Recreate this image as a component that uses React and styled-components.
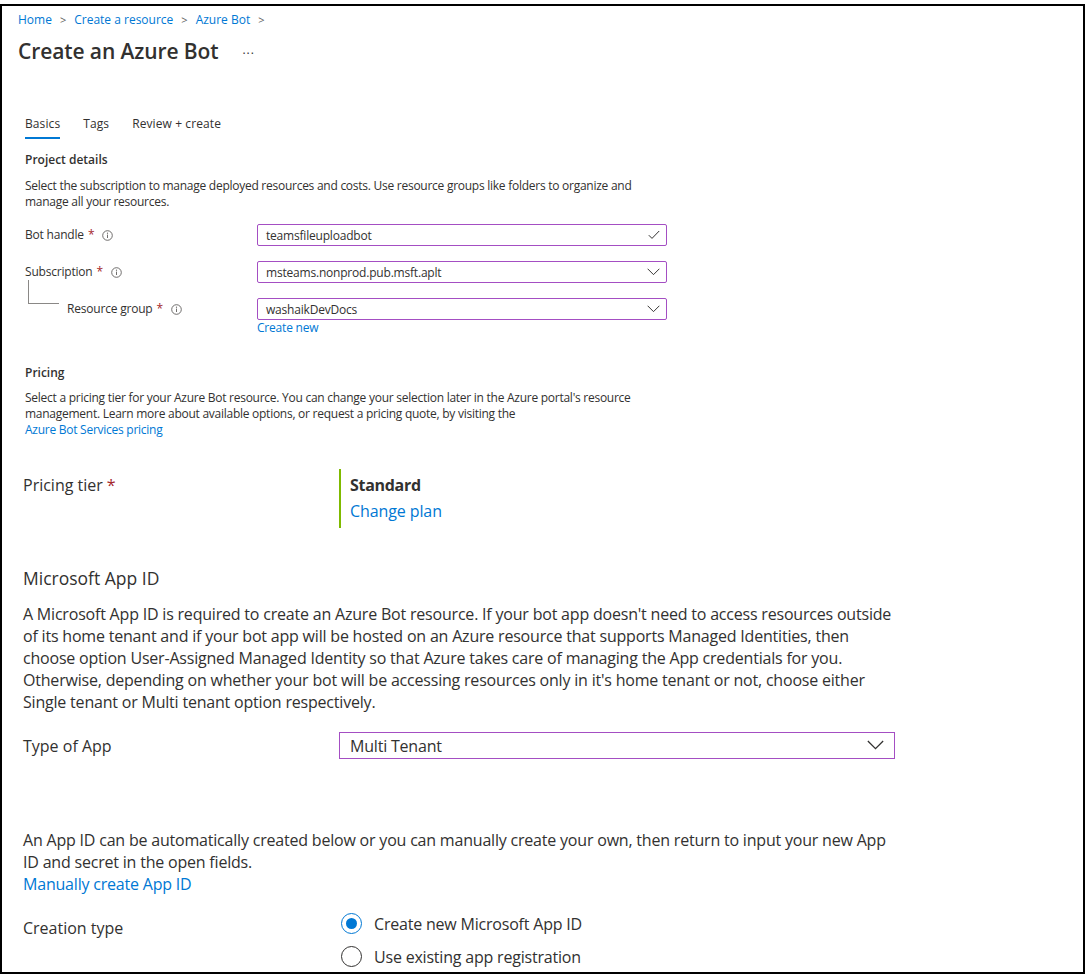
import React from 'react'
import styled, { createGlobalStyle } from 'styled-components'

const GlobalStyle = createGlobalStyle`
  html, body {
    margin: 0;
    padding: 0;
    background: #fff;
  }
  body {
    font-family: "Open Sans", "Noto Sans", sans-serif;
    color: #323130;
  }
`

const Frame = styled.div`
  box-sizing: border-box;
  margin-top: 4px;
  width: 1085px;
  height: 970px;
  border: 2px solid #000;
  overflow: hidden;
`

const Breadcrumb = styled.div`
  display: flex;
  align-items: center;
  gap: 8px;
  padding: 6px 0 0 16px;
  font-size: 12px;
  line-height: 16px;
  color: #0078d4;
`

const Crumb = styled.span`
  color: #0078d4;
`

const Sep = styled.span`
  color: #605e5c;
  font-size: 11px;
`

const TitleRow = styled.div`
  display: flex;
  align-items: center;
  gap: 24px;
  margin-top: 9px;
  padding-left: 16px;
  height: 28px;
`

const Title = styled.h1`
  margin: 0;
  font-size: 21px;
  font-weight: 600;
  line-height: 28px;
  letter-spacing: -0.1px;
  color: #323130;
`

const More = styled.span`
  font-size: 12px;
  color: #323130;
  letter-spacing: 1px;
  margin-top: -4px;
`

const Upper = styled.div`
  padding-left: 23px;
`

const Tabs = styled.div`
  display: flex;
  gap: 23px;
  margin-top: 51px;
`

const Tab = styled.div`
  font-size: 12px;
  line-height: 16px;
  padding-bottom: 5px;
  letter-spacing: 0.1px;
  color: #323130;
  border-bottom: 2px solid ${p => (p.$active ? '#0078d4' : 'transparent')};
`

const SectionTitle = styled.div`
  margin-top: ${p => p.$top}px;
  font-size: 12px;
  font-weight: 600;
  line-height: 16px;
`

const SmallText = styled.p`
  margin: ${p => p.$top}px 0 0;
  font-size: 12px;
  line-height: 16px;
  letter-spacing: -0.26px;
  white-space: nowrap;
`

const Link = styled.a`
  color: #0078d4;
  text-decoration: none;
  display: block;
`

const FieldRow = styled.div`
  display: grid;
  grid-template-columns: 232px 410px;
  align-items: center;
  margin-top: ${p => p.$top}px;
`

const Label = styled.div`
  display: flex;
  align-items: center;
  font-size: 12px;
  line-height: 16px;
  letter-spacing: -0.2px;
`

const Req = styled.span`
  color: #a4262c;
  margin-left: 4px;
`

const Info = styled.span`
  display: inline-flex;
  align-items: center;
  justify-content: center;
  width: 11px;
  height: 11px;
  margin-left: 8px;
`

const Tree = styled.span`
  box-sizing: border-box;
  width: 31px;
  height: 24px;
  margin: -18px 8px 0 3px;
  border-left: 1px solid #8a8886;
  border-bottom: 1px solid #8a8886;
  align-self: flex-start;
`

const TreeLabel = styled(Label)`
  align-self: stretch;
`

const Input = styled.div`
  box-sizing: border-box;
  display: flex;
  align-items: center;
  justify-content: space-between;
  height: 22px;
  padding: 0 6px 0 8px;
  border: 1px solid #a44ec3;
  border-radius: 2px;
  font-size: 12px;
  letter-spacing: -0.2px;
  color: #323130;
`

const Lower = styled.div`
  padding-left: 21px;
`

const TierRow = styled.div`
  display: grid;
  grid-template-columns: 316px auto;
  margin-top: 31px;
`

const BigLabel = styled.div`
  font-size: 16px;
  line-height: 22px;
  padding-top: ${p => p.$pt || 0}px;
  color: #323130;
`

const TierBox = styled.div`
  border-left: 2px solid #7fba00;
  padding: 5px 0 6px 9px;
`

const TierName = styled.div`
  font-size: 16px;
  font-weight: 700;
  line-height: 22px;
  letter-spacing: -0.3px;
`

const BigLink = styled(Link)`
  font-size: 16px;
  line-height: 22px;
  margin-top: ${p => p.$top || 0}px;
  letter-spacing: -0.1px;
`

const Heading = styled.div`
  margin-top: 38px;
  font-size: 17.5px;
  font-weight: 500;
  line-height: 24px;
`

const Para = styled.p`
  margin: ${p => p.$top}px 0 0;
  font-size: 16px;
  line-height: 22px;
  letter-spacing: -0.2px;
  white-space: nowrap;
`

const TypeRow = styled.div`
  display: grid;
  grid-template-columns: 316px 556px;
  align-items: center;
  margin-top: 19px;
`

const BigSelect = styled.div`
  box-sizing: border-box;
  display: flex;
  align-items: center;
  justify-content: space-between;
  height: 27px;
  padding: 0 10px;
  border: 1px solid #a44ec3;
  font-size: 16px;
  letter-spacing: -0.2px;
`

const CreationRow = styled.div`
  display: grid;
  grid-template-columns: 318px auto;
  margin-top: 12px;
`

const Options = styled.div`
  display: flex;
  flex-direction: column;
`

const Option = styled.label`
  display: flex;
  align-items: center;
  gap: 12px;
  height: 33px;
  font-size: 16px;
  letter-spacing: -0.2px;
`

const Radio = styled.span`
  box-sizing: border-box;
  width: 21px;
  height: 21px;
  border-radius: 50%;
  border: 1px solid ${p => (p.$on ? '#0078d4' : '#323130')};
  display: flex;
  align-items: center;
  justify-content: center;
  &::after {
    content: '';
    width: 11px;
    height: 11px;
    border-radius: 50%;
    background: ${p => (p.$on ? '#0078d4' : 'transparent')};
  }
`

const InfoIcon = () => (
  <Info>
    <svg width="11" height="11" viewBox="0 0 11 11">
      <circle cx="5.5" cy="5.5" r="4.8" fill="none" stroke="#605e5c" strokeWidth="0.9" />
      <line x1="5.5" y1="4.6" x2="5.5" y2="8" stroke="#605e5c" strokeWidth="0.9" />
      <circle cx="5.5" cy="3.2" r="0.6" fill="#605e5c" />
    </svg>
  </Info>
)

const Chevron = ({ size = 13 }) => (
  <svg width={size} height={size * 0.6} viewBox="0 0 13 8">
    <path d="M0.5 0.8 L6.5 6.8 L12.5 0.8" fill="none" stroke="#323130" strokeWidth="1" />
  </svg>
)

const Check = () => (
  <svg width="12" height="10" viewBox="0 0 12 10">
    <path d="M0.8 5.2 L4 8.4 L11.2 1" fill="none" stroke="#323130" strokeWidth="1" />
  </svg>
)

const App = () => (
  <>
    <GlobalStyle />
    <Frame>
      <Breadcrumb>
        <Crumb>Home</Crumb>
        <Sep>&gt;</Sep>
        <Crumb>Create a resource</Crumb>
        <Sep>&gt;</Sep>
        <Crumb>Azure Bot</Crumb>
        <Sep>&gt;</Sep>
      </Breadcrumb>
      <TitleRow>
        <Title>Create an Azure Bot</Title>
        <More>...</More>
      </TitleRow>

      <Upper>
        <Tabs>
          <Tab $active>Basics</Tab>
          <Tab>Tags</Tab>
          <Tab>Review + create</Tab>
        </Tabs>

        <SectionTitle $top={13}>Project details</SectionTitle>
        <SmallText $top={10}>
          Select the subscription to manage deployed resources and costs. Use resource groups like folders to organize and
          <br />
          manage all your resources.
        </SmallText>

        <FieldRow $top={14}>
          <Label>
            Bot handle<Req>*</Req>
            <InfoIcon />
          </Label>
          <Input>
            teamsfileuploadbot
            <Check />
          </Input>
        </FieldRow>
        <FieldRow $top={15}>
          <Label>
            Subscription<Req>*</Req>
            <InfoIcon />
          </Label>
          <Input>
            msteams.nonprod.pub.msft.aplt
            <Chevron />
          </Input>
        </FieldRow>
        <FieldRow $top={15}>
          <TreeLabel>
            <Tree />
            Resource group<Req>*</Req>
            <InfoIcon />
          </TreeLabel>
          <Input>
            washaikDevDocs
            <Chevron />
          </Input>
        </FieldRow>
        <FieldRow $top={0}>
          <span />
          <Label>
            <Link>Create new</Link>
          </Label>
        </FieldRow>

        <SectionTitle $top={29}>Pricing</SectionTitle>
        <SmallText $top={9}>
          Select a pricing tier for your Azure Bot resource. You can change your selection later in the Azure portal's resource
          <br />
          management. Learn more about available options, or request a pricing quote, by visiting the
          <Link>Azure Bot Services pricing</Link>
        </SmallText>
      </Upper>

      <Lower>
        <TierRow>
          <BigLabel $pt={5}>
            Pricing tier<Req>*</Req>
          </BigLabel>
          <TierBox>
            <TierName>Standard</TierName>
            <BigLink $top={4}>Change plan</BigLink>
          </TierBox>
        </TierRow>

        <Heading>Microsoft App ID</Heading>
        <Para $top={13}>
          A Microsoft App ID is required to create an Azure Bot resource. If your bot app doesn't need to access resources outside
          <br />
          of its home tenant and if your bot app will be hosted on an Azure resource that supports Managed Identities, then
          <br />
          choose option User-Assigned Managed Identity so that Azure takes care of managing the App credentials for you.
          <br />
          Otherwise, depending on whether your bot will be accessing resources only in it's home tenant or not, choose either
          <br />
          Single tenant or Multi tenant option respectively.
        </Para>

        <TypeRow>
          <BigLabel>Type of App</BigLabel>
          <BigSelect>
            Multi Tenant
            <Chevron size={17} />
          </BigSelect>
        </TypeRow>

        <Para $top={70}>
          An App ID can be automatically created below or you can manually create your own, then return to input your new App
          <br />
          ID and secret in the open fields.
          <Link>Manually create App ID</Link>
        </Para>

        <CreationRow>
          <BigLabel $pt={10}>Creation type</BigLabel>
          <Options>
            <Option>
              <Radio $on />
              Create new Microsoft App ID
            </Option>
            <Option>
              <Radio />
              Use existing app registration
            </Option>
          </Options>
        </CreationRow>
      </Lower>
    </Frame>
  </>
)

export default App
